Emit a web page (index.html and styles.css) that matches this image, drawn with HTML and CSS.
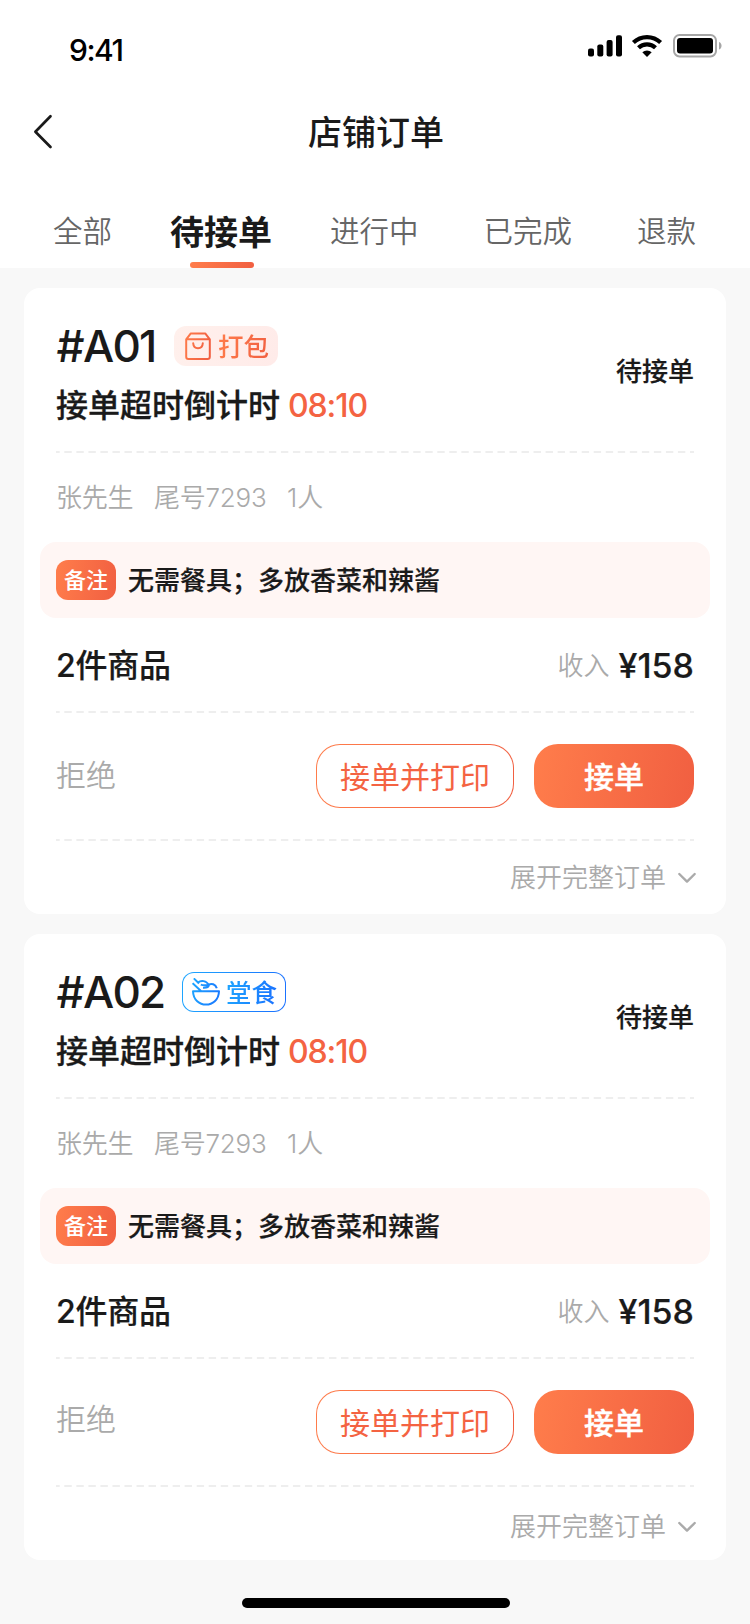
FILE: index.html
```html
<!DOCTYPE html>
<html lang="zh-CN">
<head>
<meta charset="utf-8">
<title>店铺订单</title>
<link rel="stylesheet" href="styles.css">
</head>
<body>
<svg class="defs" width="0" height="0" aria-hidden="true">
  <defs>
    <linearGradient id="orange" gradientUnits="userSpaceOnUse" x1="0" y1="0" x2="28" y2="6"><stop offset="0" stop-color="#ff7d4b"/><stop offset="1" stop-color="#f15f41"/></linearGradient>
    <linearGradient id="blue" gradientUnits="userSpaceOnUse" x1="0" y1="0" x2="28" y2="6"><stop offset="0" stop-color="#1ea7ff"/><stop offset="1" stop-color="#1a7cff"/></linearGradient>
  </defs>
</svg>
<header class="header">
  <div class="statusbar">
    <span class="time">9:41</span>
    <div class="signals">
      <svg width="34" height="22" viewBox="0 0 34 22"><rect x="0" y="13.5" width="6" height="8" rx="2"/><rect x="9.3" y="9.5" width="6" height="12" rx="2"/><rect x="18.6" y="5" width="6" height="16.5" rx="2"/><rect x="28" y="0.3" width="6" height="21.2" rx="2"/></svg>
      <svg class="wifi" width="32" height="24" viewBox="0 0 32 24"><path d="M2.4 8.6a19.6 19.6 0 0 1 27.2 0M7.5 13.8a12.3 12.3 0 0 1 17 0" fill="none" stroke="#000" stroke-width="4.2"/><path d="M11.3 18.2a7 7 0 0 1 9.4 0L16 23z"/></svg>
      <svg class="battery" width="50" height="24" viewBox="0 0 50 24"><rect x="1" y="1" width="42" height="21.4" rx="5.5" fill="none" stroke="#a6a6a6" stroke-width="2"/><rect x="4" y="4" width="36" height="15.4" rx="3"/><path d="M46 8c3.4 1.2 3.4 6.4 0 7.6z" fill="#a6a6a6"/></svg>
    </div>
  </div>
  <div class="navbar">
    <svg class="back" width="24" height="36" viewBox="0 0 24 36"><path d="M18.5 2.3 3.4 17.7 18.5 33" fill="none" stroke="#1a1a1a" stroke-width="2.7" stroke-linecap="round" stroke-linejoin="round"/></svg>
    <h1>店铺订单</h1>
  </div>
  <nav class="tabs">
    <a>全部</a><a class="active">待接单</a><a>进行中</a><a>已完成</a><a>退款</a>
  </nav>
</header>
<main class="orders">
  <article class="card">
    <div class="head">
      <div class="head-main">
        <div class="id-row"><span class="num">#A01</span>
          <span class="badge takeaway"><svg width="28" height="28" viewBox="0 0 28 28" fill="none" stroke="url(#orange)" stroke-width="2" stroke-linecap="round" stroke-linejoin="round"><path d="M2.2 7.3 6.8 1.4H21.2L25.8 7.3V24.7a2.2 2.2 0 0 1-2.2 2.2H4.4a2.2 2.2 0 0 1-2.2-2.2zH25.8M9.2 11.2c.4 6.6 9.2 6.6 9.6 0"/></svg><b>打包</b></span>
        </div>
        <div class="countdown">接单超时倒计时<em>08:10</em></div>
      </div>
      <span class="state">待接单</span>
    </div>
    <div class="divider"></div>
    <div class="customer"><span>张先生</span><span>尾号7293</span><span>1人</span></div>
    <div class="note"><span class="note-tag">备注</span><span class="note-text">无需餐具；多放香菜和辣酱</span></div>
    <div class="goods"><strong>2件商品</strong><span class="income">收入<b>¥158</b></span></div>
    <div class="divider"></div>
    <div class="actions"><a class="reject">拒绝</a><button class="btn outline"><span>接单并打印</span></button><button class="btn primary">接单</button></div>
    <div class="divider"></div>
    <div class="expand">展开完整订单<svg width="20" height="12" viewBox="0 0 20 12"><path d="m2.3 2 7.7 7.6L17.7 2" fill="none" stroke="#aaa" stroke-width="2.4" stroke-linecap="round" stroke-linejoin="round"/></svg></div>
  </article>
  <article class="card second">
    <div class="head">
      <div class="head-main">
        <div class="id-row"><span class="num">#A02</span>
          <span class="badge dinein"><svg width="28" height="28" viewBox="0 0 28 28" fill="none" stroke="url(#blue)" stroke-width="2" stroke-linejoin="round"><path d="M1 13.2H27C26.5 31 1.5 31 1 13.2zM.6 5.2 9 13M1.8.4 7 5.5M5.8 4.6C9 2 14.500 2.500 16.600 6.800C14 7.200 12 8 8.800 6.600M16.400 6.800C19.500 5 23.500 6 24.800 10.200M17 6.800C16.500 9.600 14 10 11 9.800"/></svg><b>堂食</b></span>
        </div>
        <div class="countdown">接单超时倒计时<em>08:10</em></div>
      </div>
      <span class="state">待接单</span>
    </div>
    <div class="divider"></div>
    <div class="customer"><span>张先生</span><span>尾号7293</span><span>1人</span></div>
    <div class="note"><span class="note-tag">备注</span><span class="note-text">无需餐具；多放香菜和辣酱</span></div>
    <div class="goods"><strong>2件商品</strong><span class="income">收入<b>¥158</b></span></div>
    <div class="divider"></div>
    <div class="actions"><a class="reject">拒绝</a><button class="btn outline"><span>接单并打印</span></button><button class="btn primary">接单</button></div>
    <div class="divider"></div>
    <div class="expand">展开完整订单<svg width="20" height="12" viewBox="0 0 20 12"><path d="m2.3 2 7.7 7.6L17.7 2" fill="none" stroke="#aaa" stroke-width="2.4" stroke-linecap="round" stroke-linejoin="round"/></svg></div>
  </article>
</main>
<div class="home-indicator"></div>
</body>
</html>
```
FILE: styles.css
```css
* { box-sizing: border-box; }
body {
  margin: 0;
  width: 750px;
  height: 1624px;
  overflow: hidden;
  background: #f8f8f8;
  color: #1a1a1a;
  font-family: Inter, "Noto Sans CJK SC", sans-serif;
  font-weight: 400;
}
svg { display: block; flex: none; }
.defs { position: absolute; }
.header { height: 268px; background: #fff; }
.statusbar { height: 88px; display: flex; justify-content: space-between; padding: 30px 27px 0 69px; }
.time { font-size: 30px; font-weight: 500; line-height: 40px; color: #000; letter-spacing: -1.5px; }
.signals { display: flex; align-items: flex-start; padding-top: 5px; }
.wifi { margin: -1px 10px 0 9px; }
.battery { margin-top: -1px; }
.navbar { height: 88px; display: grid; grid-template-columns: 102px 1fr 100px; align-items: center; }
.back { margin-left: 32px; }
h1 { margin: 0; padding-top: 2px; text-align: center; font-size: 34px; font-weight: 500; line-height: 44px; }
.tabs { height: 92px; display: flex; padding-left: 53px; color: #666; font-size: 29.5px; font-weight: 350; line-height: 111px; }
.tabs a:nth-child(3) { margin-left: 58px; }
.tabs a:nth-child(4) { margin-left: 65px; }
.tabs a:nth-child(5) { margin-left: 65px; }
.tabs .active {
  position: relative;
  margin-left: 58px;
  color: #1a1a1a;
  font-size: 34px;
  font-weight: 600;
  line-height: 114px;
}
.tabs .active::after {
  content: "";
  position: absolute;
  left: 20px;
  top: 86px;
  width: 64px;
  height: 6px;
  border-radius: 3px;
  background: linear-gradient(100deg, #ff7d4b, #f15f41);
}
.orders { display: flex; flex-direction: column; gap: 20px; padding: 20px 24px 0; }
.card { height: 626px; border-radius: 16px; background: #fff; padding: 0 32px; }
.head { height: 163px; display: flex; justify-content: space-between; padding-top: 38px; }
.id-row { height: 40px; display: flex; align-items: center; }
.num { width: 118px; font-size: 44px; font-weight: 500; line-height: 40px; white-space: nowrap; letter-spacing: -1.7px; text-indent: 0.5px; }
.second .num { width: 126px; }
.badge { width: 104px; height: 40px; border-radius: 12px; display: flex; align-items: center; gap: 6px; padding-left: 10px; }
.badge b { padding-top: 2px; font-size: 25.5px; font-weight: 500; line-height: 38px; color: transparent; background-clip: text; }
.takeaway { background: linear-gradient(100deg, #fff0ec, #ffebe9); }
.takeaway b { background-image: linear-gradient(100deg, #ff7d4b, #f15f41); }
.dinein { border: 1px solid transparent; background: linear-gradient(#fff, #fff) padding-box, linear-gradient(100deg, #1ea7ff, #1a70ff) border-box; padding-left: 9px; }
.dinein b { background-image: linear-gradient(100deg, #1ea7ff, #1a70ff); }
.countdown { margin-top: 20px; font-size: 32px; font-weight: 500; line-height: 40px; white-space: nowrap; -webkit-text-stroke: 0.3px; }
.countdown em { margin-left: 8px; font-style: normal; color: #f46342; letter-spacing: -1.1px; -webkit-text-stroke: 0; }
.state { font-size: 26px; font-weight: 500; line-height: 92px; -webkit-text-stroke: 0.2px; }
.divider {
  height: 2px;
  background: linear-gradient(90deg, #eee 33.33%, transparent 33.33% 66.67%, #eee 66.67%) 0 0 / calc(100% / 53) 2px repeat-x;
}
.customer { display: flex; gap: 20.5px; color: #aaa; font-size: 26px; font-weight: 350; line-height: 89px; height: 89px; letter-spacing: -0.2px; }
.note { height: 76px; margin: 0 -16px; padding: 0 16px; border-radius: 16px; background: #fff6f4; display: flex; align-items: center; gap: 12px; }
.note-tag { width: 60px; height: 40px; border-radius: 12px; color: #fff; font-size: 22px; font-weight: 500; line-height: 41px; text-align: center; background: linear-gradient(100deg, #ff7d4b, #f15f41); }
.note-text { padding-top: 2px; font-size: 26px; font-weight: 500; line-height: 40px; -webkit-text-stroke: 0.2px; }
.goods { height: 93px; display: flex; justify-content: space-between; line-height: 95px; }
.goods strong { font-size: 32px; font-weight: 500; letter-spacing: -0.2px; -webkit-text-stroke: 0.2px; }
.income { display: flex; color: #aaa; font-size: 26px; font-weight: 350; }
.income b { margin-left: 9px; font-size: 34px; font-weight: 500; color: #1a1a1a; -webkit-text-stroke: 0.2px; }
.actions { height: 126px; display: flex; align-items: center; gap: 20px; }
.reject { margin: -2px auto 0 0; color: #aaa; font-size: 30px; font-weight: 350; line-height: 40px; }
.second .reject { margin-top: -6px; }
.btn { height: 64px; padding: 2px 0 0; border: 0; border-radius: 24px; font: 500 30px/60px Inter, "Noto Sans CJK SC", sans-serif; }
.primary { width: 160px; color: #fff; background: linear-gradient(100deg, #ff7d4b, #f15f41); -webkit-text-stroke: 0.4px; }
.outline { width: 198px; font-weight: 400; border: 1px solid transparent; background: linear-gradient(#fff, #fff) padding-box, linear-gradient(100deg, #ff7d4b, #f15f41) border-box; color: #f46342; }
.expand { height: 73px; display: flex; justify-content: flex-end; align-items: center; gap: 11px; margin-right: -3px; color: #aaa; font-size: 26px; font-weight: 350; line-height: 40px; }
.second .expand { padding-top: 6px; }
.home-indicator { width: 268px; height: 10px; margin: 38px 0 0 242px; border-radius: 5px; background: #000; }
```
